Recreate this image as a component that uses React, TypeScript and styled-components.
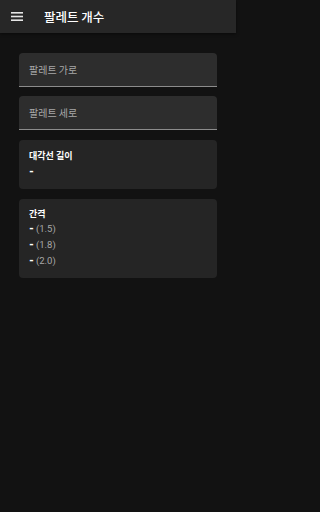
import styled, { createGlobalStyle } from "styled-components"

const GlobalStyle = createGlobalStyle`
  html, body {
    margin: 0;
    padding: 0;
    background: #121212;
  }
  body {
    font-family: Roboto, "Noto Sans CJK KR", sans-serif;
    color: #ffffff;
  }
`

const spacings = ["1.5", "1.8", "2.0"]

const MenuIcon = () => (
    <svg width="12" height="9" viewBox="0 0 12 9">
        <rect x="0" y="0" width="12" height="1.6" fill="#e6e6e6" />
        <rect x="0" y="3.7" width="12" height="1.6" fill="#e6e6e6" />
        <rect x="0" y="7.4" width="12" height="1.6" fill="#e6e6e6" />
    </svg>
)

export default function App() {
    return (
        <Page>
            <GlobalStyle />
            <AppBar>
                <MenuButton>
                    <MenuIcon />
                </MenuButton>
                <Title>팔레트 개수</Title>
            </AppBar>
            <Content>
                <Field>
                    <FieldLabel>팔레트 가로</FieldLabel>
                </Field>
                <Field>
                    <FieldLabel>팔레트 세로</FieldLabel>
                </Field>
                <Card $gap="10px">
                    <CardTitle>대각선 길이</CardTitle>
                    <ValueLine>
                        <Dash>-</Dash>
                    </ValueLine>
                </Card>
                <Card $gap="9px">
                    <CardTitle>간격</CardTitle>
                    <ValueList>
                        {spacings.map((s) => (
                            <ValueLine key={s}>
                                <Dash>-</Dash>
                                <Hint>({s})</Hint>
                            </ValueLine>
                        ))}
                    </ValueList>
                </Card>
            </Content>
        </Page>
    )
}

const Page = styled.div`
width: 236px;
min-height: 512px;
background: #121212;
`

const AppBar = styled.header`
display: flex;
align-items: center;
height: 33px;
background: #272727;
box-shadow: 0 1px 3px rgba(0, 0, 0, 0.5);
`

const MenuButton = styled.div`
display: flex;
align-items: center;
justify-content: center;
width: 12px;
margin: 0 21px 0 11px;
`

const Title = styled.h1`
margin: 0;
font-family: "Noto Sans CJK KR", sans-serif;
font-size: 12.5px;
font-weight: 500;
color: #ffffff;
`

const Content = styled.main`
display: flex;
flex-direction: column;
gap: 9px;
padding: 20px 19px;
`

const Field = styled.div`
display: flex;
align-items: center;
height: 34px;
padding: 0 10px;
background: #2d2d2d;
border-radius: 4px 4px 0 0;
border-bottom: 1px solid #8c8c8c;
box-sizing: border-box;
`

const FieldLabel = styled.span`
font-family: "Noto Sans CJK KR", sans-serif;
font-size: 10px;
color: #a8a8a8;
`

const Card = styled.section<{ $gap: string }>`
display: flex;
flex-direction: column;
gap: 2px;
margin-top: 1px;
padding: ${(p) => p.$gap} 10px 9px;
background: #252525;
border-radius: 4px;
`

const CardTitle = styled.h2`
margin: 0;
font-family: "Noto Sans CJK KR", sans-serif;
font-size: 9px;
font-weight: 700;
line-height: 12px;
color: #ffffff;
`

const ValueList = styled.div`
display: flex;
flex-direction: column;
margin-top: -1px;
`

const ValueLine = styled.div`
display: flex;
align-items: baseline;
gap: 2px;
height: 16px;
line-height: 16px;
font-size: 9.5px;
`

const Dash = styled.span`
font-size: 11px;
font-weight: 900;
color: #ffffff;
`

const Hint = styled.span`
color: #a8a8a8;
`
